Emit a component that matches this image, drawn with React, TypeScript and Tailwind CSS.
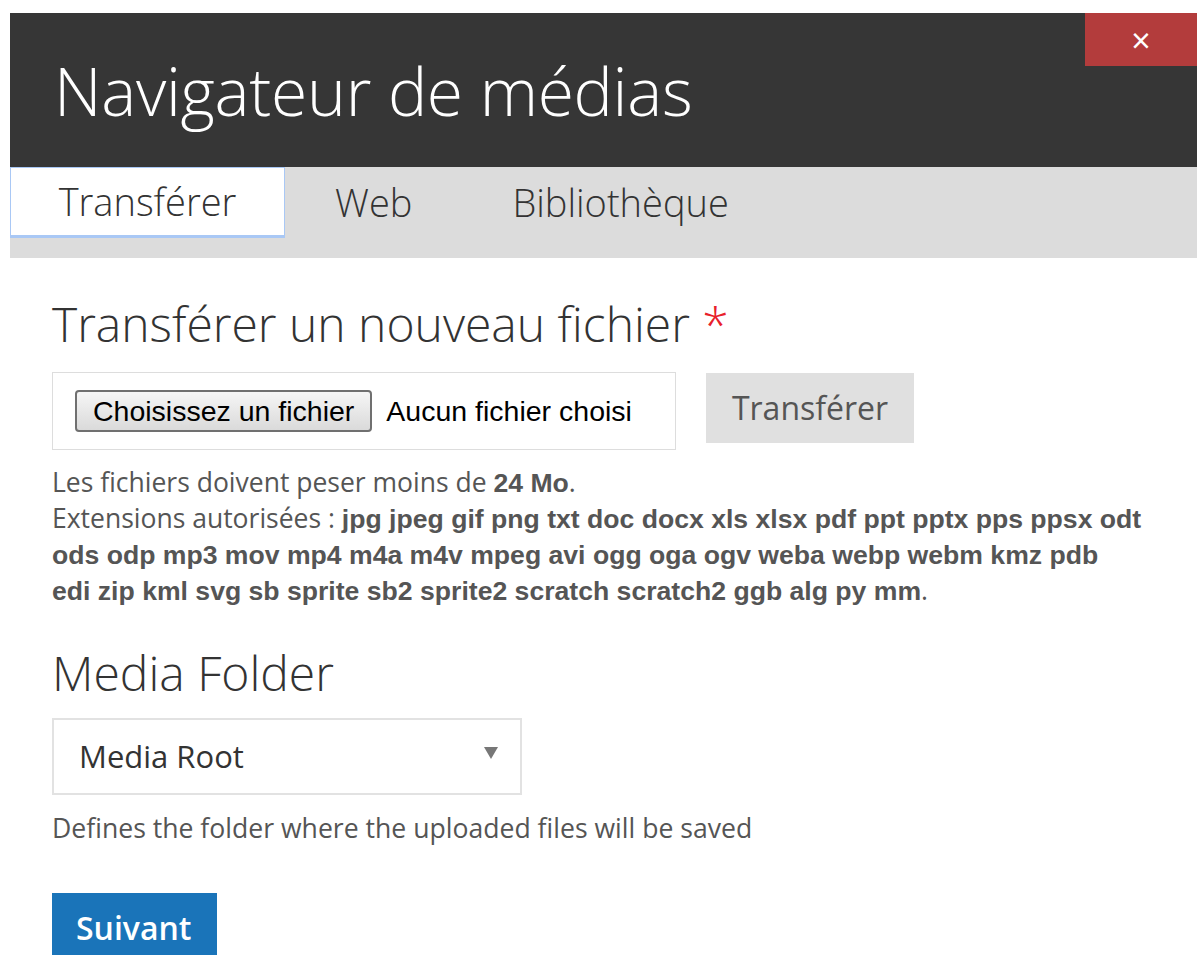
const extLines = [
  "jpg jpeg gif png txt doc docx xls xlsx pdf ppt pptx pps ppsx odt",
  "ods odp mp3 mov mp4 m4a m4v mpeg avi ogg oga ogv weba webp webm kmz pdb",
  "edi zip kml svg sb sprite sb2 sprite2 scratch scratch2 ggb alg py mm",
];

const tabs = ["Transférer", "Web", "Bibliothèque"];

export default function App() {
  return (
    <div className="min-h-[955px] bg-white pt-[13px] pl-[10px] font-['Open_Sans',sans-serif] text-[#333]">
      {/* dialog header */}
      <header className="relative flex h-[154px] items-center bg-[#363636] pl-[44px]">
        <h1 className="text-[66px] font-light leading-none tracking-[-0.3px] text-white">Navigateur de médias</h1>
        <button className="absolute right-0 top-0 flex h-[53px] w-[112px] items-center justify-center bg-[#b33c3c] text-[34px] leading-none text-white">
          ×
        </button>
      </header>

      {/* tabs */}
      <nav className="flex h-[91px] items-start bg-[#dcdcdc]">
        {tabs.map((tab, i) => (
          <div
            key={tab}
            className={
              i === 0
                ? "flex h-[71px] w-[275px] items-center justify-center border border-b-[3px] border-[#a9c8f5] bg-white text-[38px] font-light text-[#333]"
                : "flex h-[71px] items-center px-[50px] text-[38px] font-light text-[#333]"
            }
          >
            {tab}
          </div>
        ))}
      </nav>

      <main className="pl-[42px]">
        <h2 className="mt-[38px] text-[48px] font-light leading-[56px] text-[#333]">
          Transférer un nouveau fichier <span className="text-[#e8202a]">*</span>
        </h2>

        <div className="mt-[20px] flex items-start gap-[30px]">
          <div className="flex h-[78px] w-[624px] items-center border border-[#dddddd] pl-[22px] font-['Liberation_Sans',Arial,sans-serif] text-[28.5px] text-black">
            <span className="rounded-[4px] border-2 border-[#707070] bg-gradient-to-b from-[#f6f6f6] to-[#dadada] px-[16px] py-[2px] leading-[34px]">
              Choisissez un fichier
            </span>
            <span className="ml-[14px]">Aucun fichier choisi</span>
          </div>
          <button className="mt-px h-[70px] w-[208px] bg-[#e0e0e0] text-[32px] text-[#555]">Transférer</button>
        </div>

        <div className="mt-[15px] text-[26.5px] leading-[35px] text-[#555]">
          <p>
            Les fichiers doivent peser moins de{" "}
            <b className="font-['Liberation_Sans',Arial,sans-serif] text-[26.6px] font-bold">24 Mo</b>.
          </p>
          <p>
            Extensions autorisées :{" "}
            {extLines.map((line, i) => (
              <span key={i}>
                <b className="font-['Liberation_Sans',Arial,sans-serif] text-[26.6px] font-bold">{line}</b>
                {i < extLines.length - 1 ? <br /> : "."}
              </span>
            ))}
          </p>
        </div>

        <h2 className="mt-[36px] text-[48px] font-light leading-[56px] text-[#333]">Media Folder</h2>

        <div className="mt-[17px] flex h-[77px] w-[470px] items-center justify-between border-2 border-[#e2e2e2] pl-[25px] pr-[22px]">
          <span className="text-[31px] text-[#333]">Media Root</span>
          <svg width="14" height="12" viewBox="0 0 14 12" className="mb-[8px]">
            <polygon points="0,0 14,0 7,12" fill="#777" />
          </svg>
        </div>

        <p className="mt-[16px] text-[26.6px] leading-[34px] text-[#555]">
          Defines the folder where the uploaded files will be saved
        </p>

        <button className="mt-[48px] h-[70px] w-[165px] bg-[#1a74b9] pl-[24px] text-left text-[32px] font-semibold text-white">
          Suivant
        </button>
      </main>
    </div>
  );
}
